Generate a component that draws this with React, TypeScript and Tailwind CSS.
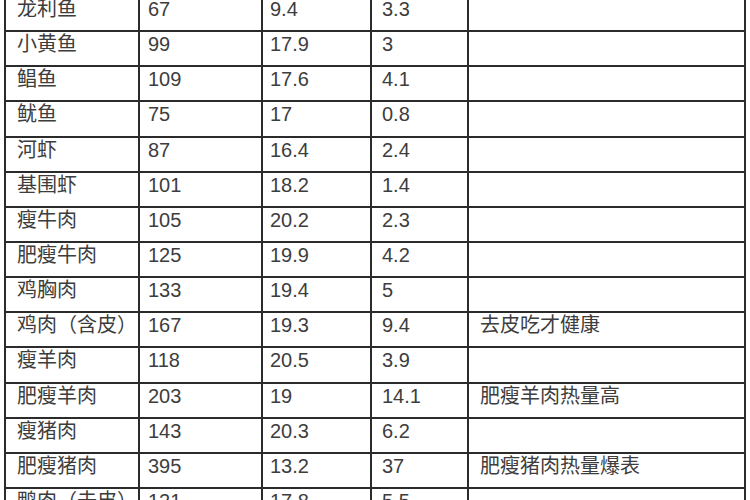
import React from "react";

type Row = { name: string; kcal: string; protein: string; fat: string; note?: string };

const rows: Row[] = [
  { name: "龙利鱼", kcal: "67", protein: "9.4", fat: "3.3" },
  { name: "小黄鱼", kcal: "99", protein: "17.9", fat: "3" },
  { name: "鲳鱼", kcal: "109", protein: "17.6", fat: "4.1" },
  { name: "鱿鱼", kcal: "75", protein: "17", fat: "0.8" },
  { name: "河虾", kcal: "87", protein: "16.4", fat: "2.4" },
  { name: "基围虾", kcal: "101", protein: "18.2", fat: "1.4" },
  { name: "瘦牛肉", kcal: "105", protein: "20.2", fat: "2.3" },
  { name: "肥瘦牛肉", kcal: "125", protein: "19.9", fat: "4.2" },
  { name: "鸡胸肉", kcal: "133", protein: "19.4", fat: "5" },
  { name: "鸡肉（含皮）", kcal: "167", protein: "19.3", fat: "9.4", note: "去皮吃才健康" },
  { name: "瘦羊肉", kcal: "118", protein: "20.5", fat: "3.9" },
  { name: "肥瘦羊肉", kcal: "203", protein: "19", fat: "14.1", note: "肥瘦羊肉热量高" },
  { name: "瘦猪肉", kcal: "143", protein: "20.3", fat: "6.2" },
  { name: "肥瘦猪肉", kcal: "395", protein: "13.2", fat: "37", note: "肥瘦猪肉热量爆表" },
  { name: "鸭肉（去皮）", kcal: "121", protein: "17.8", fat: "5.5" },
];

export default function App() {
  return (
    <div
      className="w-[750px] h-[500px] overflow-hidden bg-white text-[20px] leading-[22px] text-[#3d3d3d]"
      style={{ fontFamily: '"Liberation Sans", "Noto Sans CJK SC", sans-serif' }}
    >
      <div className="ml-[4px] mt-[-5px] w-[742px] border-x-2 border-[#2b2b2b]">
        {rows.map((r) => (
          <div key={r.name} className="flex h-[35.15px] border-t-2 border-[#2b2b2b]">
            <div className="w-[134px] shrink-0 border-r-2 border-[#2b2b2b] pl-[11px] pt-px whitespace-nowrap">{r.name}</div>
            <div className="w-[123px] shrink-0 border-r-2 border-[#2b2b2b] pl-[8px] pt-px">{r.kcal}</div>
            <div className="w-[109px] shrink-0 border-r-2 border-[#2b2b2b] pl-[7px] pt-px">{r.protein}</div>
            <div className="w-[97px] shrink-0 border-r-2 border-[#2b2b2b] pl-[10px] pt-px">{r.fat}</div>
            <div className="flex-1 pl-[11px] pt-px">{r.note}</div>
          </div>
        ))}
      </div>
    </div>
  );
}
